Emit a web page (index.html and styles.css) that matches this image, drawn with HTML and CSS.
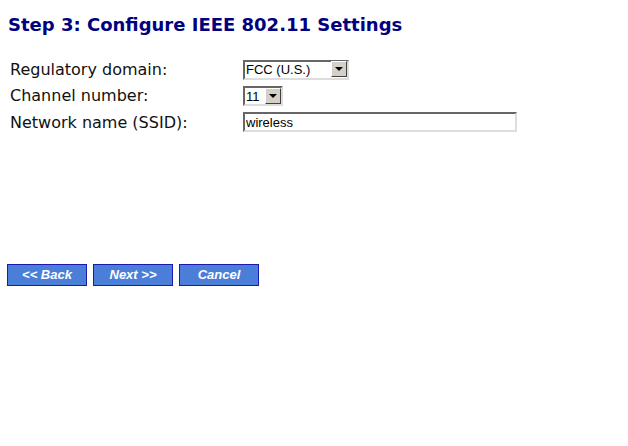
FILE: index.html
```html
<!DOCTYPE html>
<html lang="en">
<head>
  <meta charset="UTF-8" />
  <title>Step 3: Configure IEEE 802.11 Settings</title>
  <link rel="stylesheet" href="styles.css">
</head>
<body>

  <h1>Step 3: Configure IEEE 802.11 Settings</h1>

  <form class="settings">
    <div class="row">
      <label for="domain">Regulatory domain:</label>
      <div class="combo domain">
        <select id="domain">
          <option>FCC (U.S.)</option>
        </select>
        <span class="arrow"></span>
      </div>
    </div>
    <div class="row">
      <label for="channel">Channel number:</label>
      <div class="combo channel">
        <select id="channel">
          <option>11</option>
        </select>
        <span class="arrow"></span>
      </div>
    </div>
    <div class="row">
      <label for="ssid">Network name (SSID):</label>
      <input id="ssid" type="text" value="wireless" />
    </div>
  </form>

  <div class="buttons">
    <button type="button">&lt;&lt; Back</button>
    <button type="button">Next &gt;&gt;</button>
    <button type="button">Cancel</button>
  </div>

</body>
</html>
```

FILE: styles.css
```css
* { box-sizing: border-box; margin: 0; padding: 0; }

body {
  font-family: 'DejaVu Sans', Verdana, sans-serif;
  background: #fff;
  color: #000;
  padding: 14px 8px;
}

h1 {
  font-size: 18px;
  font-weight: bold;
  color: #000080;
  margin-bottom: 21px;
}

.settings {
  padding-left: 2px;
}

.row {
  display: flex;
  align-items: center;
  height: 26.5px;
}

label {
  width: 233px;
  font-size: 16px;
  color: #111;
}

select, input {
  font-family: 'Liberation Sans', Arial, sans-serif;
  font-size: 13px;
  height: 20px;
  background: #fff;
  color: #000;
}

.combo {
  position: relative;
  height: 20px;
}

.combo select {
  appearance: none;
  -webkit-appearance: none;
  width: 100%;
  border: 2px solid;
  border-color: #666 #ddd #ddd #666;
  padding: 0 1px;
  outline: none;
}

.combo .arrow {
  position: absolute;
  right: 2px;
  top: 2px;
  width: 16px;
  height: 16px;
  background: #d4d0c8;
  border: 1px solid;
  border-color: #fff #404040 #404040 #fff;
  pointer-events: none;
}

.combo .arrow::after {
  content: "";
  position: absolute;
  left: 3px;
  top: 5px;
  border-left: 4px solid transparent;
  border-right: 4px solid transparent;
  border-top: 4px solid #000;
}

.domain { width: 106px; }
.channel { width: 40px; }

input {
  width: 274px;
  padding: 0 1px;
  border: 2px solid;
  border-color: #666 #ddd #ddd #666;
}

.buttons {
  display: flex;
  gap: 6px;
  margin-top: 128px;
  margin-left: -1px;
}

button {
  width: 80px;
  height: 22px;
  background-color: #4a7ed8;
  border: 1px solid #1a1ab0;
  color: #fff;
  font-family: 'Liberation Sans', Arial, sans-serif;
  font-size: 13px;
  font-weight: bold;
  font-style: italic;
  cursor: pointer;
}
```
